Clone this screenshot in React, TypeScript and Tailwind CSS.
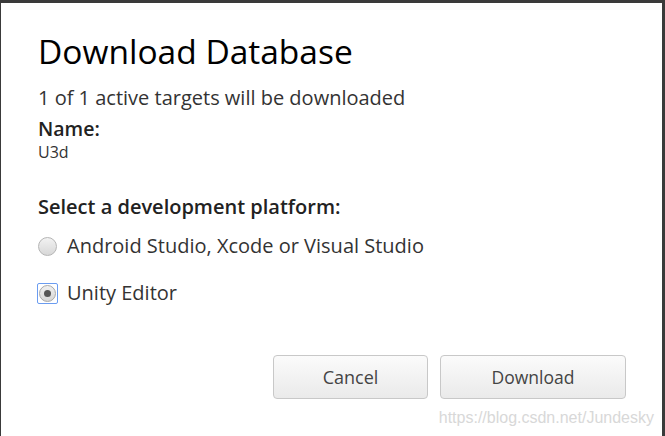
import React from "react";

export default function App() {
  return (
    <div className="w-[665px] h-[436px] bg-[#3a3a3a] pt-[3px] pl-[1px] pr-[3px] overflow-hidden" style={{ fontFamily: '"Open Sans", sans-serif' }}>
      <div className="relative w-full h-[433px] bg-white pl-[37px] pt-[26px] text-[#222]">
        <h1 className="text-[33.5px] leading-[44px] text-black">Download Database</h1>
        <p className="mt-[11px] text-[20px] leading-[28px] text-[#333]">1 of 1 active targets will be downloaded</p>
        <p className="mt-[4px] text-[19.5px] leading-[26px] font-semibold text-[#222]">Name:</p>
        <p className="text-[16px] leading-[20px] text-[#333]">U3d</p>
        <p className="mt-[32px] text-[20px] leading-[26px] font-semibold text-[#222]">Select a development platform:</p>
        <div className="mt-[12px] flex items-center gap-[10px] h-[28px]">
          <span className="w-[19px] h-[19px] rounded-full border border-[#b5b5b5] bg-gradient-to-b from-[#f2f2f2] to-[#d8d8d8]" />
          <span className="text-[20px] leading-[28px] text-[#333]">Android Studio, Xcode or Visual Studio</span>
        </div>
        <div className="mt-[19px] flex items-center gap-[10px] h-[28px]">
          <span className="w-[21px] h-[21px] -ml-[1px] -mr-[1px] border border-[#6b9cf0] rounded-[2px] flex items-center justify-center">
            <span className="w-[17px] h-[17px] rounded-full border border-[#a8a8a8] bg-gradient-to-b from-[#f0f0f0] to-[#d6d6d6] flex items-center justify-center">
              <span className="w-[7px] h-[7px] rounded-full bg-[#555]" />
            </span>
          </span>
          <span className="text-[20px] leading-[28px] text-[#333]">Unity Editor</span>
        </div>
        <div className="mt-[48px] flex justify-end gap-[12px] pr-[36px]">
          <button className="w-[155px] h-[44px] rounded-[4px] border border-[#c8c8c8] bg-gradient-to-b from-[#fbfbfb] to-[#eaeaea] text-[18px] text-[#444]">Cancel</button>
          <button className="w-[186px] h-[44px] rounded-[4px] border border-[#c8c8c8] bg-gradient-to-b from-[#fbfbfb] to-[#eaeaea] text-[17.5px] text-[#444]">Download</button>
        </div>
        <div className="absolute right-[8px] bottom-[6px] text-[16px] text-[#d8d8d8]" style={{ fontFamily: '"Liberation Sans", Arial, sans-serif' }}>https://blog.csdn.net/Jundesky</div>
      </div>
    </div>
  );
}
